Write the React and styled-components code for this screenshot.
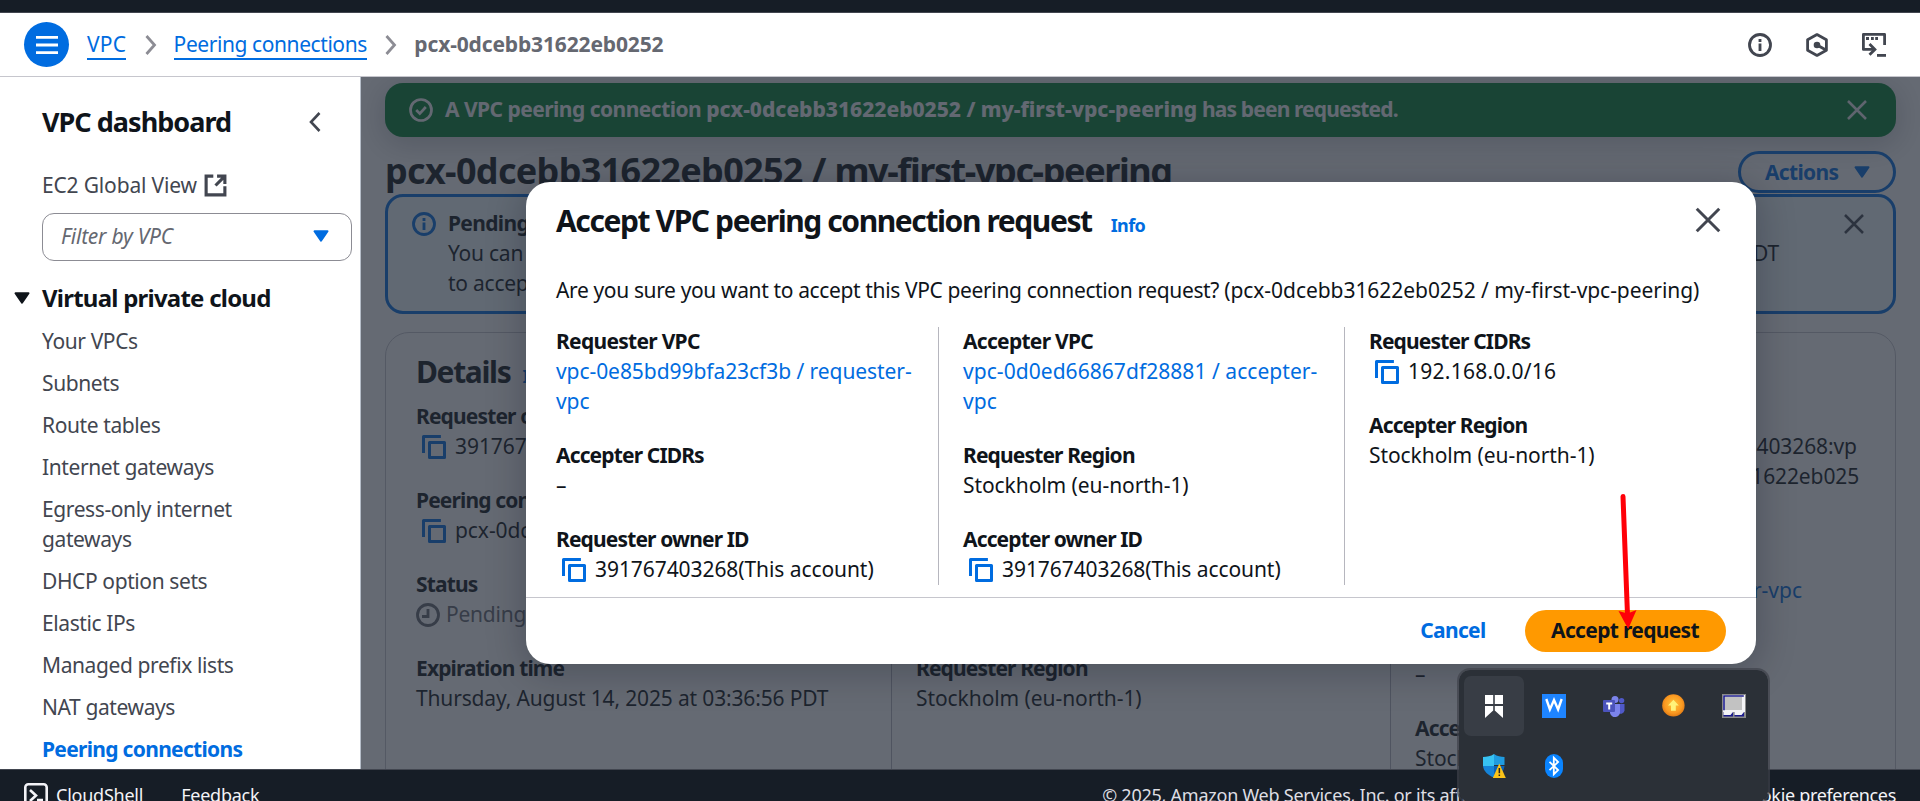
import React from "react";
import styled, { createGlobalStyle } from "styled-components";

const Global = createGlobalStyle`
  *, *::before, *::after { box-sizing: border-box; }
  body { margin: 0; background: #fff; }
  a { color: inherit; text-decoration: none; }
  h1, h2, h3, p, ul, dl, dt, dd { margin: 0; padding: 0; }
  ul { list-style: none; }
  button { border: 0; background: none; padding: 0; font: inherit; color: inherit; letter-spacing: inherit; display: block; }
  svg { display: block; flex: none; }
`;

const blue = "#006ce0";
const ink = "#0f141a";

const Page = styled.div`
  position: relative;
  width: 1920px;
  height: 801px;
  overflow: hidden;
  display: flex;
  flex-direction: column;
  font-family: "Noto Sans", "Open Sans", sans-serif;
  font-size: 21px;
  line-height: 30px;
  letter-spacing: -0.0115em;
  color: ${ink};
`;

const Bold = styled.span`
  font-weight: ${(p) => p.$weight || 700};
  letter-spacing: ${(p) => p.$track || "-0.032em"};
`;
const Tracked = styled.span`
  letter-spacing: ${(p) => p.$track};
`;

/* ---------- top ---------- */
const TopStrip = styled.div`
  flex: none;
  height: 13px;
  background: #161d26;
  border-bottom: 1px solid #424650;
`;
const Header = styled.header`
  flex: none;
  height: 64px;
  display: flex;
  align-items: center;
  padding: 0 34px 0 24px;
  border-bottom: 1px solid #c6c6cd;
`;
const MenuButton = styled.button`
  && {
    width: 45px;
    height: 45px;
    border-radius: 50%;
    background: ${blue};
    display: grid;
    place-items: center;
    margin-right: 18px;
  }
`;
const Crumb = styled.a`
  line-height: 27px;
  padding-top: 1px;
  color: ${blue};
  border-bottom: 2px solid ${blue};
  white-space: nowrap;
  letter-spacing: ${(p) => p.$track};
`;
const CrumbCurrent = styled(Bold)`
  color: #656871;
  line-height: 27px;
  padding: 1px 0 2px;
`;
const CrumbArrow = styled.svg`
  margin: 0 16px 0 17.5px;
`;
const HeaderTools = styled.div`
  margin-left: auto;
  display: flex;
  gap: 33px;
  color: #424650;
`;

/* ---------- sidebar ---------- */
const Body = styled.div`
  flex: none;
  height: 692px;
  display: flex;
  overflow: hidden;
`;
const Sidebar = styled.nav`
  flex: none;
  width: 361px;
  border-right: 1px solid #b6bec9;
  padding: 28px 8px 0 42px;
  color: #424650;
  white-space: nowrap;
`;
const SideTitle = styled.div`
  display: flex;
  align-items: center;
  justify-content: space-between;
  padding-right: 30px;
  height: 34px;
  margin-bottom: 31px;
  font-size: 27px;
  line-height: 34px;
  color: ${ink};
`;
const External = styled.a`
  display: flex;
  align-items: center;
  gap: 6px;
  letter-spacing: -0.008em;
`;
const Select = styled.div`
  margin-top: 13px;
  width: 310px;
  height: 48px;
  border: 1.5px solid #8c8c94;
  border-radius: 12px;
  padding: 0 22px 2px 18px;
  display: flex;
  align-items: center;
  justify-content: space-between;
  font-style: italic;
  color: #656871;
`;
const Section = styled.h3`
  display: flex;
  align-items: center;
  gap: 12px;
  margin: 22px 0 13px -28px;
  font-size: 24px;
  line-height: 30px;
  color: ${ink};
`;
const NavList = styled.ul`
  display: flex;
  flex-direction: column;
  gap: 12px;
`;
const NavItem = styled.li`
  width: 240px;
  white-space: normal;
  color: ${(p) => (p.$active ? blue : "#424650")};
  font-weight: ${(p) => (p.$active ? 700 : 400)};
  letter-spacing: ${(p) => p.$track || "-0.019em"};
`;

/* ---------- main ---------- */
const Main = styled.main`
  position: relative;
  flex: 1;
  min-width: 0;
  overflow: hidden;
  padding: 6px 24px 0;
`;
const Flash = styled.div`
  height: 54px;
  border-radius: 18px;
  background: #00802f;
  color: #f9f9fb;
  display: flex;
  align-items: center;
  gap: 12px;
  padding: 0 27px 0 24px;
  box-shadow: 0 6px 30px 2px rgba(0, 7, 22, 0.22);
  > span { margin-top: -2px; }
  svg:last-child { margin-left: auto; }
`;
const TitleRow = styled.div`
  margin-top: 14px;
  height: 42px;
  display: flex;
  justify-content: space-between;
  align-items: center;
  h1 {
    font-size: 36px;
    line-height: 45px;
    padding-bottom: 3px;
    white-space: nowrap;
  }
`;
const ActionsButton = styled.button`
  && {
    width: 158px;
    height: 42px;
    border: 3px solid ${blue};
    border-radius: 21px;
    color: ${blue};
    display: flex;
    align-items: center;
    gap: 16px;
    padding-left: 24px;
  }
`;
const Alert = styled.div`
  margin-top: 1px;
  height: 120px;
  border: 3px solid ${blue};
  border-radius: 18px;
  background: #f0fbff;
  display: flex;
  align-items: flex-start;
  gap: 12px;
  padding: 11px 27px 0 24px;
  > svg { margin-top: 4px; }
`;
const AlertText = styled.div`
  width: 1331px;
  white-space: nowrap;
`;
const SplitLine = styled.p`
  display: flex;
  justify-content: space-between;
`;
const Push = styled.span`
  margin: 4px 0 0 auto;
`;
const Card = styled.section`
  margin-top: 18px;
  height: 480px;
  border: 1.5px solid #c6c6cd;
  border-radius: 24px;
  padding: 20px 30px 0;
`;
const CardTitle = styled.h2`
  display: flex;
  align-items: baseline;
  gap: 12px;
  height: 38px;
  margin-bottom: 10px;
  font-size: 30px;
  line-height: 38px;
`;
const InfoLink = styled.a`
  font-size: 18px;
  line-height: 30px;
  font-weight: 700;
  letter-spacing: -0.035em;
  color: ${blue};
`;
const DetailGrid = styled.div`
  display: grid;
  grid-template-columns: 475px 499px 1fr;
`;
const Column = styled.dl`
  display: flex;
  flex-direction: column;
  gap: 24px;
  padding-left: ${(p) => (p.$first ? 0 : 24)}px;
  border-left: ${(p) => (p.$first ? 0 : 1)}px solid #b6b6be;
  min-height: ${(p) => p.$height || 0}px;
  white-space: nowrap;
`;
const Term = styled.dt`
  font-weight: 700;
  letter-spacing: ${(p) => p.$track || "-0.041em"};
`;
const Value = styled.dd`
  display: flex;
  align-items: flex-start;
  gap: ${(p) => (p.$gap ? p.$gap : 9)}px;
  padding-left: ${(p) => p.$indent || 0}px;
  color: ${(p) => (p.$link ? blue : p.$muted ? "#656871" : "inherit")};
  letter-spacing: ${(p) => p.$track || "-0.0035em"};
  > svg { margin-top: 4px; }
`;

/* ---------- modal ---------- */
const Backdrop = styled.div`
  position: absolute;
  inset: 0;
  background: rgba(35, 43, 55, 0.7);
  display: flex;
  align-items: center;
  justify-content: center;
`;
const Modal = styled.div`
  width: 1230px;
  height: 482px;
  border-radius: 24px;
  background: #fff;
  box-shadow: 0 6px 36px 4px rgba(0, 7, 22, 0.22);
  display: flex;
  flex-direction: column;
`;
const ModalHead = styled.div`
  display: flex;
  align-items: baseline;
  height: 58px;
  padding: 20px 33px 0 30.5px;
  gap: 19px;
  h2 { font-size: 30px; line-height: 38px; white-space: nowrap; }
  svg { margin-left: auto; align-self: flex-start; margin-top: 3px; }
`;
const ModalText = styled.p`
  margin-top: 35px;
  padding-left: 30.5px;
  height: 30px;
  white-space: nowrap;
`;
const ModalGrid = styled.div`
  display: grid;
  grid-template-columns: 382px 406px 1fr;
  margin: 22px 0 12px 30.5px;
  height: 258px;
  dt, dd { position: relative; top: -1px; }
`;
const ModalFoot = styled.div`
  flex: 1;
  border-top: 1.5px solid #c6c6cd;
  display: flex;
  align-items: flex-start;
  justify-content: flex-end;
  gap: 39px;
  padding: 12px 30px 0;
  line-height: 41px;
  color: ${blue};
`;
const Primary = styled.button`
  && {
    width: 201px;
    height: 42px;
    border-radius: 21px;
    background: #ff9900;
    color: ${ink};
    padding-bottom: 1px;
  }
`;

/* ---------- footer ---------- */
const Footer = styled.footer`
  flex: none;
  height: 32px;
  overflow: hidden;
  background: #161d26;
  border-top: 1px solid #424650;
  display: flex;
  gap: 38px;
  padding: 12px 24px 0;
  font-size: 18px;
  line-height: 27px;
  color: #f3f3f7;
  white-space: nowrap;
`;
const Shell = styled.a`
  display: flex;
  gap: 8px;
  svg { margin-top: 1px; }
`;
const Copyright = styled.span`
  margin-left: auto;
  width: 599px;
  color: #dedee3;
`;

/* ---------- overlays ---------- */
const Pointer = styled.svg`
  position: absolute;
  left: 1610px;
  top: 485px;
`;
const Tray = styled.div`
  position: absolute;
  left: 1457px;
  top: 668px;
  width: 313px;
  height: 136px;
  border: 2px solid rgba(62, 66, 74, 0.7);
  border-radius: 13px;
  background: #2b3037;
  background-clip: padding-box;
  display: grid;
  grid-template-columns: repeat(5, 60px);
  grid-auto-rows: 60px;
  padding: 6px 5px;
`;
const TrayCell = styled.div`
  display: grid;
  place-items: center;
  border-radius: 7px;
  background: ${(p) => (p.$hot ? "#383d45" : "transparent")};
`;

/* ---------- icons ---------- */
const Caret = ({ w = 16, h = 12, color }) => (
  <svg width={w} height={h} viewBox="0 0 16 12">
    <path d="M1.5 1.2h13L8 10.6z" fill={color} stroke={color} strokeWidth="2" strokeLinejoin="round" />
  </svg>
);
const Close = ({ size = 24, color, stroke = 1.7 }) => (
  <svg width={size} height={size} viewBox="0 0 16 16" stroke={color} strokeWidth={stroke}>
    <path d="m2 2 12 12M14 2 2 14" />
  </svg>
);
const InfoIcon = ({ color }) => (
  <svg width="24" height="24" viewBox="0 0 16 16" fill="none" stroke={color} strokeWidth="1.9">
    <circle cx="8" cy="8" r="7" />
    <path d="M8 12V7M8 6V4" strokeWidth="1.9" />
  </svg>
);
const Copy = () => (
  <svg width="24" height="24" viewBox="0 0 16 16" fill="none" stroke={blue} strokeWidth="2">
    <path d="M15 5H5v10h10z" strokeLinejoin="round" />
    <path d="M12.6 1H1v11" strokeLinejoin="round" />
  </svg>
);
const ClockIcon = () => (
  <svg width="24" height="24" viewBox="0 0 16 16" fill="none" stroke="#656871" strokeWidth="1.9">
    <circle cx="8" cy="8" r="7" />
    <path d="M8 4v5H4" />
  </svg>
);

const nav = [
  ["Your VPCs"],
  ["Subnets"],
  ["Route tables"],
  ["Internet gateways"],
  ["Egress-only internet gateways"],
  ["DHCP option sets"],
  ["Elastic IPs"],
  ["Managed prefix lists"],
  ["NAT gateways"],
  ["Peering connections", true],
];

function Field({ label, labelTrack, children, copy, ...rest }) {
  return (
    <div>
      <Term $track={labelTrack}>{label}</Term>
      <Value $indent={copy ? 6 : 0} {...rest}>
        {copy && <Copy />}
        <span>{children}</span>
      </Value>
    </div>
  );
}

function TopHeader() {
  const arrow = (
    <CrumbArrow width="14" height="22" viewBox="0 0 14 22" fill="none" stroke="#8c8c94" strokeWidth="2.8">
      <path d="m2.5 2 8 9-8 9" />
    </CrumbArrow>
  );
  return (
    <Header>
      <MenuButton aria-label="Open navigation">
        <svg width="22" height="20" viewBox="0 0 22 20" stroke="#fff" strokeWidth="2.8">
          <path d="M0 2.3h22M0 10h22M0 17.7h22" />
        </svg>
      </MenuButton>
      <Crumb $track="0.008em">VPC</Crumb>
      {arrow}
      <Crumb $track="-0.02em">Peering connections</Crumb>
      {arrow}
      <CrumbCurrent $track="-0.007em">pcx-0dcebb31622eb0252</CrumbCurrent>
      <HeaderTools>
        <InfoIcon color="#424650" />
        <svg width="24" height="24" viewBox="0 0 24 24" fill="none" stroke="#424650" strokeWidth="2.8">
          <path d="M12 1.6 21.4 6.8v10.4L12 22.4 2.6 17.2V6.8z" strokeLinejoin="round" />
          <circle cx="12" cy="12" r="3.3" fill="#424650" stroke="none" />
          <path d="m12 12 9 5" />
        </svg>
        <svg width="24" height="24" viewBox="0 0 24 24" fill="none" stroke="#424650" strokeWidth="2.8">
          <path d="M22.6 12V1.4H1.4v15h11" strokeLinejoin="round" />
          <path d="m7.5 11 5.4 5.4-5.4 5.4" />
          <path d="M4 5.5h3M9 5.5h2.8M13.2 5.5H16" />
          <path d="M15 22.4h9" />
        </svg>
      </HeaderTools>
    </Header>
  );
}

function SideNav() {
  return (
    <Sidebar>
      <SideTitle>
        <Bold $track="-0.036em">VPC dashboard</Bold>
        <svg width="14" height="22" viewBox="0 0 14 22" fill="none" stroke="#424650" strokeWidth="2.6">
          <path d="m11.5 2-8.5 9 8.5 9" />
        </svg>
      </SideTitle>
      <External>
        EC2 Global View
        <svg width="25" height="25" viewBox="0 0 16 16" fill="none" stroke="#424650" strokeWidth="2">
          <path d="M9 2h5v5M8 8l6-6M14 8.4V14H2V2h4.6" />
        </svg>
      </External>
      <Select>
        Filter by VPC
        <Caret color={blue} />
      </Select>
      <Section>
        <Caret color={ink} />
        <Bold>Virtual private cloud</Bold>
      </Section>
      <NavList>
        {nav.map(([t, active]) => (
          <NavItem key={t} $active={active} $track={active && "-0.033em"}>
            {t}
          </NavItem>
        ))}
      </NavList>
    </Sidebar>
  );
}

function PeeringModal() {
  return (
    <Backdrop>
      <Modal role="dialog">
        <ModalHead>
          <h2>
            <Bold $track="-0.047em">Accept VPC peering connection request</Bold>
          </h2>
          <InfoLink>Info</InfoLink>
          <Close size={30} color="#424650" stroke={1.6} />
        </ModalHead>
        <ModalText>
          <Tracked $track="-0.0175em">Are you sure you want to accept this VPC peering connection request? </Tracked>
          <Tracked $track="-0.0025em">(pcx-0dcebb31622eb0252 / my-first-vpc-peering)</Tracked>
        </ModalText>
        <ModalGrid>
          <Column $first>
            <Field label="Requester VPC" labelTrack="-0.034em" $link $track="-0.003em">
              vpc-0e85bd99bfa23cf3b / requester-
              <br />
              vpc
            </Field>
            <Field label="Accepter CIDRs">–</Field>
            <Field label="Requester owner ID" copy>391767403268(This account)</Field>
          </Column>
          <Column>
            <Field label="Accepter VPC" labelTrack="-0.034em" $link $track="0.0025em">
              vpc-0d0ed66867df28881 / accepter-
              <br />
              vpc
            </Field>
            <Field label="Requester Region">Stockholm (eu-north-1)</Field>
            <Field label="Accepter owner ID" copy>391767403268(This account)</Field>
          </Column>
          <Column>
            <Field label="Requester CIDRs" copy $track="0.012em">192.168.0.0/16</Field>
            <Field label="Accepter Region">Stockholm (eu-north-1)</Field>
          </Column>
        </ModalGrid>
        <ModalFoot>
          <Bold>Cancel</Bold>
          <Primary>
            <Bold>Accept request</Bold>
          </Primary>
        </ModalFoot>
      </Modal>
    </Backdrop>
  );
}

function Content() {
  return (
    <Main>
      <Flash>
        <svg width="24" height="24" viewBox="0 0 16 16" fill="none" stroke="#f9f9fb" strokeWidth="1.8">
          <circle cx="8" cy="8" r="7" />
          <path d="m4.800 8 2.400 2.400L11.200 6" />
        </svg>
        <Bold $track="-0.025em">
          A VPC peering connection{" "}
          <Bold $weight={800} $track="-0.001em">pcx-0dcebb31622eb0252 / my-first-vpc-peering</Bold>{" "}
          <Bold $track="-0.041em">has been requested.</Bold>
        </Bold>
        <Close color="#ebebf0" />
      </Flash>
      <TitleRow>
        <h1>
          <Bold $track="-0.019em">pcx-0dcebb31622eb0252 / </Bold>
          <Bold $track="-0.039em">my-first-vpc-peering</Bold>
        </h1>
        <ActionsButton>
          <Bold>Actions</Bold>
          <Caret color={blue} />
        </ActionsButton>
      </TitleRow>
      <Alert>
        <InfoIcon color={blue} />
        <AlertText>
          <Bold as="p">Pending</Bold>
          <SplitLine>
            <span>You can</span>
            <span>PDT</span>
          </SplitLine>
          <p>to accept</p>
        </AlertText>
        <Push>
          <Close color="#424650" />
        </Push>
      </Alert>
      <Card>
        <CardTitle>
          <Bold $track="-0.045em">Details</Bold>
          <InfoLink>Info</InfoLink>
        </CardTitle>
        <DetailGrid>
          <Column $first>
            <Field label="Requester owner ID" copy>391767403268</Field>
            <Field label="Peering connection ID" copy>pcx-0dcebb31622eb0252</Field>
            <div>
              <Term>Status</Term>
              <Value $muted $gap={6} $track="-0.0115em">
                <ClockIcon />
                Pending
              </Value>
            </div>
            <Field label="Expiration time" $track="-0.0075em">Thursday, August 14, 2025 at 03:36:56 PDT</Field>
          </Column>
          <Column $height={420}>
            <Field label="Requester VPC">vpc-0e85bd99bfa23cf3b</Field>
            <Field label="Requester CIDRs">192.168.0.0/16</Field>
            <Field label="Accepter owner ID">391767403268</Field>
            <Field label="Requester Region">Stockholm (eu-north-1)</Field>
          </Column>
          <Column>
            <Field label="Peering connection ARN" copy>
              <Tracked $track="-0.005em">arn:aws:ec2:eu-north-1:391767403268:vp</Tracked>
              <br />
              <Tracked $track="-0.068em">c-peering-connection/pcx-0dcebb3</Tracked>
              <Tracked $track="-0.005em">1622eb025</Tracked>
              <br />2
            </Field>
            <Field label="Accepter VPC" $link $track="0.001em">vpc-0d0ed66867df28881 / accepter-vpc</Field>
            <Field label="Accepter CIDRs">–</Field>
            <Field label="Accepter Region">Stockholm (eu-north-1)</Field>
          </Column>
        </DetailGrid>
      </Card>
      <PeeringModal />
    </Main>
  );
}

function SystemTray() {
  return (
    <Tray>
      <TrayCell $hot>
        <svg width="24" height="24" viewBox="0 0 24 24" fill="#fff">
          <path d="M3 1h8.2v9H3zM12.8 1H21v9h-8.2zM3 12h8.2v4.6L3 24zM12.8 12H21v12l-8.2-7.4z" />
        </svg>
      </TrayCell>
      <TrayCell>
        <svg width="24" height="24" viewBox="0 0 24 24">
          <path d="M0 0h24v24H0z" fill="#1e84ff" />
          <path d="M4.300 5 7.900 15.500 12 6l4.100 9.500L19.700 5" fill="none" stroke="#fff" strokeWidth="2.400" strokeMiterlimit="8" />
        </svg>
      </TrayCell>
      <TrayCell>
        <svg width="24" height="24" viewBox="0 0 24 24">
          <circle cx="19.6" cy="6.6" r="2.7" fill="#5059c9" />
          <path d="M17 10h5.5v6.5a4 4 0 0 1-5.5 3z" fill="#5059c9" />
          <circle cx="13" cy="5.4" r="3.5" fill="#7b83eb" />
          <path d="M8 10h10v7a5 5 0 0 1-10 2z" fill="#7b83eb" />
          <rect x="1" y="6" width="12" height="12" rx="1" fill="#4b53bc" />
          <path d="M4.2 8.400h6v2H8.2V15.500H6.200v-5.100H4.2z" fill="#fff" />
        </svg>
      </TrayCell>
      <TrayCell>
        <svg width="24" height="24" viewBox="0 0 24 24">
          <defs>
            <radialGradient id="sun" cx=".5" cy=".45" r=".55">
              <stop offset="0" stopColor="#ffc53a" />
              <stop offset=".7" stopColor="#fb9a22" />
              <stop offset="1" stopColor="#e07a14" />
            </radialGradient>
          </defs>
          <circle cx="11.4" cy="11.4" r="11.2" fill="url(#sun)" />
          <path d="m11.4 5.8 5.4 5.8h-3v5.2H9v-5.2H6z" fill="#fff27a" />
        </svg>
      </TrayCell>
      <TrayCell>
        <svg width="24" height="24" viewBox="0 0 24 24">
          <path d="M0 0h24v24H0z" fill="#8b8b8b" />
          <path d="M1 1h22v17H1z" fill="#f4f4f6" />
          <path d="M1.200 1.200h20.600v1.600H2.800v13.400H1.200z" fill="#1b1b8c" />
          <path d="M3 3h17v13H3z" fill="#c2c2c2" />
          <path d="M1.500 18h9.500v4.500H1.500zM12.500 18H22v4.500h-9.500z" fill="#1b1b8c" />
          <path d="M1.500 18h9.500l-2.500 3H1.500zM12.500 18H22l-2.500 3h-7z" fill="#f4f4f6" />
        </svg>
      </TrayCell>
      <TrayCell>
        <svg width="24" height="24" viewBox="0 0 24 24">
          <path d="M12 0c3 2.2 7 3 10.500 3v8H12z" fill="#1f9be0" />
          <path d="M12 0C9 2.200 4.500 3 1 3v9h11z" fill="#37c2f2" />
          <path d="M1 12h11v11.500C6 21.500 1.500 17 1 12z" fill="#1583d8" />
          <path d="M12 12h10.500C22 17 18 21.500 12 23.500z" fill="#0b62b8" />
          <path d="M17.300 9.500 23.800 24H10.800z" fill="#fcc419" />
          <path d="M16.600 14h1.500v5.200h-1.500zM16.600 20.500h1.500V22h-1.500z" fill="#222" />
        </svg>
      </TrayCell>
      <TrayCell>
        <svg width="24" height="24" viewBox="0 0 24 24" fill="none">
          <rect x="3" width="18" height="24" rx="9" fill="#0a84ff" />
          <path d="m7.500 7.800 8.600 8.200-4.300 4.300V3.700L16.100 8l-8.600 8.200" stroke="#fff" strokeWidth="1.8" />
        </svg>
      </TrayCell>
    </Tray>
  );
}

export default function App() {
  return (
    <Page>
      <Global />
      <TopStrip />
      <TopHeader />
      <Body>
        <SideNav />
        <Content />
      </Body>
      <Footer>
        <Shell>
          <svg width="24" height="24" viewBox="0 0 24 24" fill="none" stroke="#f3f3f7" strokeWidth="2.600">
            <rect x="1.300" y="1.300" width="21.400" height="21.400" rx="3" />
            <path d="m6 7 6 5.500L6 18M13 17h6" />
          </svg>
          CloudShell
        </Shell>
        <span>Feedback</span>
        <Copyright>© 2025, Amazon Web Services, Inc. or its affiliates.</Copyright>
        <Tracked $track="-0.018em">Cookie preferences</Tracked>
      </Footer>
      <Pointer width="40" height="150" viewBox="0 0 40 150">
        <path d="M13 11.500 17.500 130" stroke="#ff0008" strokeWidth="5" strokeLinecap="round" />
        <path d="M8.500 126 17.500 128.500 26.500 125 18.200 144z" fill="#ff0008" />
      </Pointer>
      <SystemTray />
    </Page>
  );
}
